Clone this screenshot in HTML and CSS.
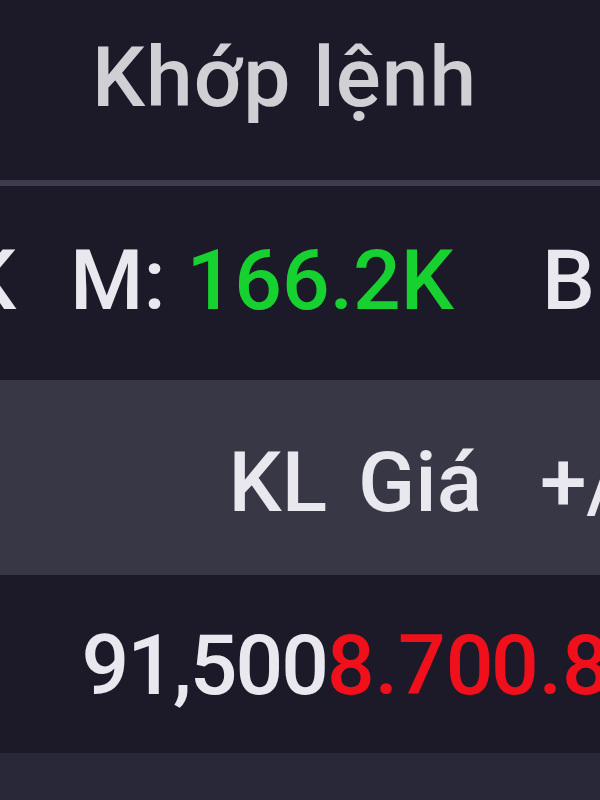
FILE: index.html
```html
<!DOCTYPE html>
<html lang="vi">
<head>
    <meta charset="UTF-8">
    <meta name="viewport" content="width=device-width, initial-scale=1.0">
    <title>Khớp lệnh</title>
    <link rel="stylesheet" href="styles.css">
</head>
<body>
    <div class="panel">
        <div class="panel-title">Khớp lệnh</div>
        <div class="stats">
            <div class="stat-cut"><span class="stat">T: <span class="val">330.0K</span></span></div>
            <span class="stat">M: <span class="val up">166.2K</span></span>
            <span class="stat">B: <span class="val down">163.8K</span></span>
        </div>
        <div class="grid head">
            <div class="c-kl">KL</div>
            <div class="c-price">Giá</div>
            <div class="c-chg">+/-</div>
        </div>
        <div class="grid row">
            <div class="c-kl">91,500</div>
            <div class="c-price down">8.70</div>
            <div class="c-chg down">0.80</div>
        </div>
        <div class="grid row alt"></div>
    </div>
</body>
</html>
```

FILE: styles.css
```css
body {
    margin: 0;
    background-color: #1c1a28;
    font-family: Roboto, "Noto Sans", Arial, sans-serif;
    font-size: 84px;
    font-weight: 500;
    line-height: 1;
    color: #e8e8ee;
}
.panel {
    width: 600px;
    height: 800px;
    overflow: hidden;
}
.panel-title {
    padding: 36px 0 60px 92px;
    color: #cfcfd4;
    letter-spacing: 1px;
    border-bottom: 6px solid #3e3d4d;
    white-space: nowrap;
}
.stats {
    display: flex;
    padding: 53px 0 57px;
    white-space: nowrap;
}
.stat-cut {
    width: 16px;
    display: flex;
    justify-content: flex-end;
    margin-right: 54px;
}
.stat {
    flex-shrink: 0;
}
.stat + .stat {
    margin-left: 88px;
}
.up {
    color: #16d130;
}
.down {
    color: #f0101c;
}
.grid {
    display: grid;
    grid-template-columns: 327px 164px 200px;
    white-space: nowrap;
}
.head {
    background-color: #383746;
    padding: 61px 0 50px;
}
.head .c-kl {
    text-align: right;
}
.head .c-price {
    text-align: right;
    padding-right: 9px;
}
.head .c-chg {
    padding-left: 49px;
}
.row {
    padding: 49px 0 45px;
}
.row .c-kl {
    text-align: right;
    letter-spacing: -2px;
}
.row.alt {
    background-color: #292838;
    height: 84px;
}
```
